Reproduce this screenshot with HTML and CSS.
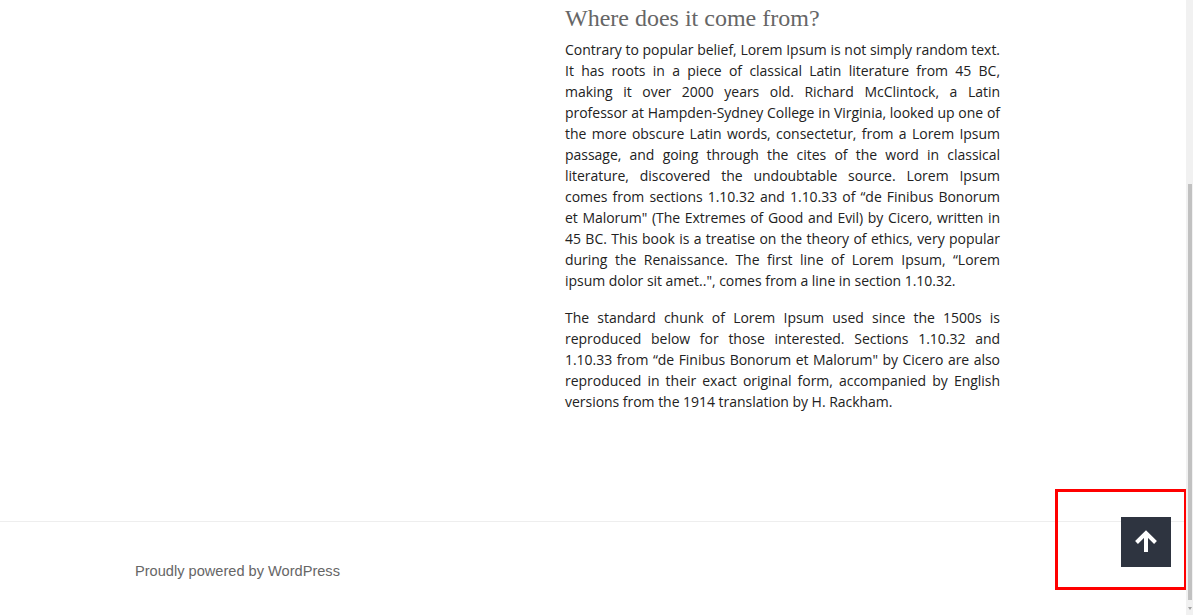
FILE: index.html
```html
<!DOCTYPE html>
<html lang="en">
<head>
<meta charset="utf-8">
<title>Where does it come from?</title>
<link rel="stylesheet" href="styles.css">
</head>
<body>
<div class="page">
  <main class="content">
    <div class="spacer"></div>
    <article class="entry">
      <h2 class="entry-title">Where does it come from?</h2>
      <p>Contrary to popular belief, Lorem Ipsum is not simply random text. It has roots in a piece of classical Latin literature from 45 BC, making it over 2000 years old. Richard McClintock, a Latin professor at Hampden-Sydney College in Virginia, looked up one of the more obscure Latin words, consectetur, from a Lorem Ipsum passage, and going through the cites of the word in classical literature, discovered the undoubtable source. Lorem Ipsum comes from sections 1.10.32 and 1.10.33 of “de Finibus Bonorum et Malorum" (The Extremes of Good and Evil) by Cicero, written in 45 BC. This book is a treatise on the theory of ethics, very popular during the Renaissance. The first line of Lorem Ipsum, “Lorem ipsum dolor sit amet..", comes from a line in section 1.10.32.</p>
      <p>The standard chunk of Lorem Ipsum used since the 1500s is reproduced below for those interested. Sections 1.10.32 and 1.10.33 from “de Finibus Bonorum et Malorum" by Cicero are also reproduced in their exact original form, accompanied by English versions from the 1914 translation by H. Rackham.</p>
    </article>
  </main>
  <footer class="site-footer">
    <a class="credit" href="#">Proudly powered by WordPress</a>
  </footer>
</div>
<a class="to-top" href="#" aria-label="Back to top">
  <svg width="26" height="26" viewBox="0 0 26 26" aria-hidden="true">
    <path d="M13 23V4.5M3.5 13.5L13 4l9.5 9.5" fill="none" stroke="#fff" stroke-width="4" stroke-linecap="butt" stroke-linejoin="miter"/>
  </svg>
</a>
<div class="annotation"></div>
<div class="scrollbar"><div class="thumb"></div><div class="arrow"></div></div>
</body>
</html>
```

FILE: styles.css
```css
html, body {
  margin: 0;
  padding: 0;
  background: #fff;
  overflow: hidden;
}

.page {
  width: 1186px;
  height: 615px;
  display: flex;
  flex-direction: column;
}

.content {
  display: flex;
  height: 521px;
  flex: none;
}

.spacer {
  width: 565px;
  flex: none;
}

.entry {
  width: 435px;
  flex: none;
}

.entry-title {
  margin: 0 0 3px;
  font-family: "Liberation Serif", "Times New Roman", serif;
  font-weight: normal;
  font-size: 24px;
  line-height: 36px;
  color: #666;
}

.entry p {
  margin: 0 0 16px;
  font-family: "Open Sans", sans-serif;
  font-size: 14px;
  line-height: 21px;
  letter-spacing: -0.03px;
  color: #222;
  text-align: justify;
}

.site-footer {
  border-top: 1px solid #eee;
  padding: 38px 0 0 135px;
}

.credit {
  font-family: "Liberation Sans", Arial, sans-serif;
  font-size: 14.6px;
  line-height: 22px;
  color: #666;
  text-decoration: none;
}

.to-top {
  position: fixed;
  right: 22px;
  bottom: 48px;
  width: 50px;
  height: 50px;
  background: #2e3440;
  display: flex;
  align-items: center;
  justify-content: center;
}

.annotation {
  position: fixed;
  left: 1055px;
  top: 489px;
  width: 126px;
  height: 95px;
  border: 3px solid #ff0000;
  pointer-events: none;
}

.scrollbar {
  position: fixed;
  top: 0;
  right: 0;
  width: 7px;
  height: 615px;
  background: #f1f1f1;
}

.thumb {
  position: absolute;
  top: 184px;
  left: 2px;
  width: 4px;
  height: 416px;
  background: #c1c1c1;
}

.arrow {
  position: absolute;
  left: 2px;
  bottom: 5px;
  width: 0;
  height: 0;
  border-left: 2px solid transparent;
  border-right: 2px solid transparent;
  border-top: 3px solid #a3a3a3;
}
```
